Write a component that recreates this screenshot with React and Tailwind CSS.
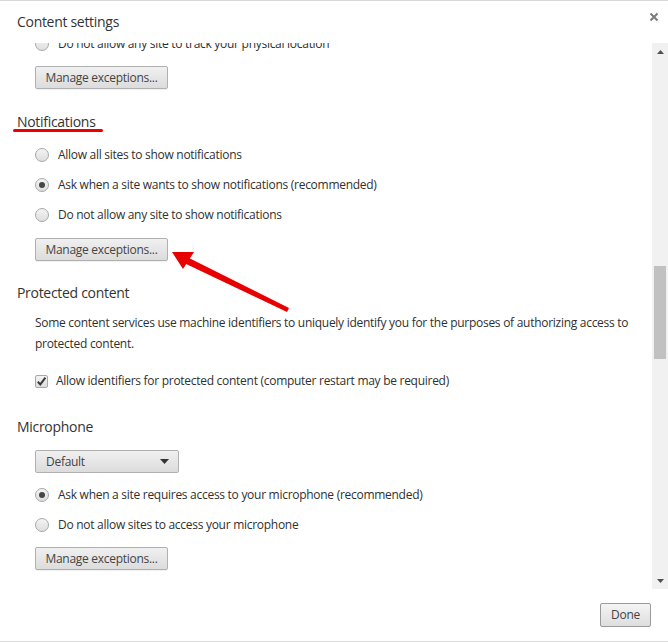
import React from "react";

function Radio({ checked }) {
  return (
    <span className="relative flex h-[14px] w-[14px] shrink-0 items-center justify-center rounded-full border border-[#a8a8a8] bg-gradient-to-b from-[#f4f4f4] to-[#dedede]">
      {checked && <span className="h-[6px] w-[6px] rounded-full bg-[#474747]" />}
    </span>
  );
}

function RadioRow({ checked, children }) {
  return (
    <div className="flex h-[30px] items-center gap-[9px] pl-[35px]">
      <Radio checked={checked} />
      <span>{children}</span>
    </div>
  );
}

function Btn({ children, className = "" }) {
  return (
    <div
      className={
        "flex h-[23px] w-[133px] items-center justify-center rounded-[2px] border border-[#b0b0b0] bg-gradient-to-b from-[#f0f0f0] to-[#dcdcdc] text-[#444] shadow-[0_1px_0_rgba(0,0,0,0.06)] " +
        className
      }
    >
      {children}
    </div>
  );
}

export default function App() {
  return (
    <div
      className="relative flex h-[642px] w-[668px] flex-col overflow-hidden border-t border-b border-[#d9d9d9] bg-white text-[12px] tracking-[-0.28px] text-[#303030]"
      style={{ fontFamily: '"Open Sans", "Liberation Sans", sans-serif' }}
    >
      {/* header */}
      <div className="flex h-[42px] shrink-0 items-start justify-between pl-[17px] pr-[9px]">
        <div className="mt-[11px] text-[14px] leading-[20px] tracking-[-0.3px] text-[#333]">Content settings</div>
        <svg className="mt-[11px]" width="10" height="10" viewBox="0 0 10 10">
          <path d="M1.5 1.5 L8.5 8.5 M8.5 1.5 L1.5 8.5" stroke="#7a7a7a" strokeWidth="2" />
        </svg>
      </div>

      {/* scroll viewport */}
      <div className="flex min-h-0 flex-1">
        <div className="relative min-w-0 flex-1 overflow-hidden">
          <div className="mt-[-14px] flex flex-col">
            <RadioRow>Do not allow any site to track your physical location</RadioRow>
            <div className="mt-[7px] pl-[35px]">
              <Btn>Manage exceptions...</Btn>
            </div>

            <div className="relative mt-[23px] h-[20px] pl-[17px] text-[14px] leading-[20px] tracking-[-0.3px] text-[#333]">
              Notifications
              <span className="absolute left-[13px] top-[17px] h-[3px] w-[90px] rounded-full bg-[#ee0000]" />
            </div>
            <div className="mt-[8px]">
              <RadioRow>Allow all sites to show notifications</RadioRow>
              <RadioRow checked>Ask when a site wants to show notifications (recommended)</RadioRow>
              <RadioRow>Do not allow any site to show notifications</RadioRow>
            </div>
            <div className="mt-[8px] pl-[35px]">
              <Btn>Manage exceptions...</Btn>
            </div>

            <div className="mt-[22px] h-[20px] pl-[17px] text-[14px] leading-[20px] tracking-[-0.3px] text-[#333]">
              Protected content
            </div>
            <p className="mt-[9px] pl-[35px] pr-[10px] leading-[21px]">
              Some content services use machine identifiers to uniquely identify you for the purposes of authorizing access to protected content.
            </p>
            <div className="mt-[17px] flex h-[20px] items-center gap-[8px] pl-[35px]">
              <span className="flex h-[13px] w-[13px] shrink-0 items-center justify-center rounded-[2px] border border-[#a8a8a8] bg-gradient-to-b from-[#f4f4f4] to-[#dedede]">
                <svg width="11" height="11" viewBox="0 0 11 11">
                  <path d="M1.8 5.8 L4.3 8.4 L9.4 1.6" fill="none" stroke="#3a3a3a" strokeWidth="2" />
                </svg>
              </span>
              <span>Allow identifiers for protected content (computer restart may be required)</span>
            </div>

            <div className="mt-[26px] h-[20px] pl-[17px] text-[14px] leading-[20px] tracking-[-0.3px] text-[#333]">
              Microphone
            </div>
            <div className="mt-[13px] pl-[35px]">
              <div className="flex h-[23px] w-[144px] items-center justify-between rounded-[2px] border border-[#b0b0b0] bg-gradient-to-b from-[#f0f0f0] to-[#dcdcdc] pl-[10px] pr-[9px] text-[#444]">
                <span>Default</span>
                <svg width="9" height="5" viewBox="0 0 9 5">
                  <path d="M0 0 H9 L4.5 5 Z" fill="#333" />
                </svg>
              </div>
            </div>
            <div className="mt-[7px]">
              <RadioRow checked>Ask when a site requires access to your microphone (recommended)</RadioRow>
              <RadioRow>Do not allow sites to access your microphone</RadioRow>
            </div>
            <div className="mt-[7px] pl-[35px]">
              <Btn>Manage exceptions...</Btn>
            </div>
          </div>
        </div>

        {/* scrollbar */}
        <div className="flex w-[16px] shrink-0 flex-col items-center bg-[#f1f1f1]">
          <div className="flex h-[17px] w-full items-center justify-center">
            <svg width="7" height="4" viewBox="0 0 7 4">
              <path d="M0 4 H7 L3.5 0 Z" fill="#505050" />
            </svg>
          </div>
          <div className="mt-[206px] h-[93px] w-[12px] bg-[#c1c1c1]" />
          <div className="flex-1" />
          <div className="flex h-[17px] w-full items-center justify-center">
            <svg width="7" height="4" viewBox="0 0 7 4">
              <path d="M0 0 H7 L3.5 4 Z" fill="#505050" />
            </svg>
          </div>
        </div>
      </div>

      {/* footer */}
      <div className="flex h-[52px] shrink-0 items-start justify-end pr-[17px] pt-[14px]">
        <div className="flex h-[24px] w-[51px] items-center justify-center rounded-[2px] border border-[#9a9a9a] bg-gradient-to-b from-[#f4f4f4] to-[#dedede] text-[#444]">
          Done
        </div>
      </div>

      {/* annotation arrow */}
      <svg className="pointer-events-none absolute left-0 top-0" width="668" height="642">
        <polygon points="289,307 187,256 184,262 287,311" fill="#e80000" />
        <polygon points="172,251 194,251 183,268" fill="#e80000" />
      </svg>
    </div>
  );
}
